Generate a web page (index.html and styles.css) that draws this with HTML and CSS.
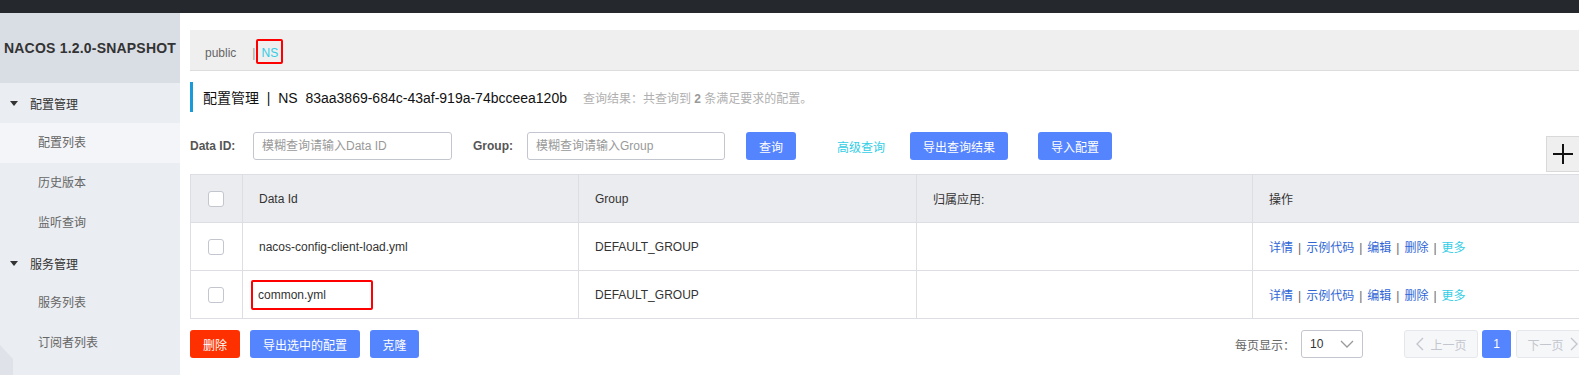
FILE: index.html
```html
<!DOCTYPE html>
<html lang="zh-CN">
<head>
<meta charset="utf-8">
<title>Nacos</title>
<link rel="stylesheet" href="styles.css">
</head>
<body>
<div class="topbar"></div>
<div class="layout">
  <aside class="sidebar">
    <div class="brand">NACOS 1.2.0-SNAPSHOT</div>
    <nav class="menu">
      <div class="menu-group"><span class="caret"></span>配置管理</div>
      <div class="menu-item active">配置列表</div>
      <div class="menu-item">历史版本</div>
      <div class="menu-item">监听查询</div>
      <div class="menu-group"><span class="caret"></span>服务管理</div>
      <div class="menu-item">服务列表</div>
      <div class="menu-item">订阅者列表</div>
    </nav>
    <div class="corner"></div>
  </aside>
  <main class="main">
    <div class="ns-bar">
      <span class="ns-public">public</span>
      <span class="ns-sep">|</span>
      <span class="ns-current">NS</span>
    </div>
    <div class="title-row">
      <span class="title-text">配置管理&nbsp; | &nbsp;NS&nbsp; 83aa3869-684c-43af-919a-74bcceea120b</span>
      <span class="title-info">查询结果：共查询到 <b>2</b> 条满足要求的配置。</span>
    </div>
    <div class="search-row">
      <label class="label label-id">Data ID:</label>
      <div class="input input-id">模糊查询请输入Data ID</div>
      <label class="label label-group">Group:</label>
      <div class="input input-group">模糊查询请输入Group</div>
      <button class="btn btn-query">查询</button>
      <span class="adv-link">高级查询</span>
      <button class="btn btn-export">导出查询结果</button>
      <button class="btn btn-import">导入配置</button>
    </div>
    <div class="add-btn">
      <svg width="20" height="20" viewBox="0 0 20 20"><path d="M10 0V20M0 10H20" stroke="#111" stroke-width="2" fill="none"/></svg>
    </div>
    <table class="table">
      <colgroup>
        <col class="c-check"><col class="c-id"><col class="c-group"><col class="c-app"><col class="c-op">
      </colgroup>
      <thead>
        <tr>
          <th class="cell-check"><span class="checkbox"></span></th>
          <th>Data Id</th>
          <th>Group</th>
          <th>归属应用:</th>
          <th>操作</th>
        </tr>
      </thead>
      <tbody>
        <tr>
          <td class="cell-check"><span class="checkbox"></span></td>
          <td>nacos-config-client-load.yml</td>
          <td>DEFAULT_GROUP</td>
          <td></td>
          <td><span class="link">详情</span><span class="sep">|</span><span class="link">示例代码</span><span class="sep">|</span><span class="link">编辑</span><span class="sep">|</span><span class="link">删除</span><span class="sep">|</span><span class="link more">更多</span></td>
        </tr>
        <tr>
          <td class="cell-check"><span class="checkbox"></span></td>
          <td><span class="hl">common.yml</span></td>
          <td>DEFAULT_GROUP</td>
          <td></td>
          <td><span class="link">详情</span><span class="sep">|</span><span class="link">示例代码</span><span class="sep">|</span><span class="link">编辑</span><span class="sep">|</span><span class="link">删除</span><span class="sep">|</span><span class="link more">更多</span></td>
        </tr>
      </tbody>
    </table>
    <div class="footer-row">
      <div class="footer-actions">
        <button class="btn btn-danger">删除</button>
        <button class="btn btn-export-sel">导出选中的配置</button>
        <button class="btn btn-clone">克隆</button>
      </div>
      <div class="pager">
        <span class="page-size-label">每页显示：</span>
        <div class="select"><span>10</span>
          <svg width="14" height="8" viewBox="0 0 14 8"><path d="M1 1L7 7L13 1" stroke="#999" stroke-width="1.3" fill="none"/></svg>
        </div>
        <div class="page-btn page-prev"><svg width="9" height="14" viewBox="0 0 9 14"><path d="M8 1L2 7L8 13" stroke="#c4c6cf" stroke-width="1.4" fill="none"/></svg>上一页</div>
        <div class="page-num">1</div>
        <div class="page-btn page-next">下一页<svg width="9" height="14" viewBox="0 0 9 14"><path d="M1 1L7 7L1 13" stroke="#c4c6cf" stroke-width="1.4" fill="none"/></svg></div>
      </div>
    </div>
  </main>
</div>
</body>
</html>
```
FILE: styles.css
```css
* { box-sizing: border-box; }
html, body { margin: 0; padding: 0; overflow: hidden; }
body {
  width: 1600px;
  height: 375px;
  font-family: "Liberation Sans", "Noto Sans CJK SC", sans-serif;
  font-size: 12px;
  color: #333;
  background: #fff;
}
.topbar { height: 13px; background: #25292e; }
.layout { display: flex; height: 362px; }

.sidebar {
  width: 180px;
  flex: none;
  background: #eaedf1;
  position: relative;
}
.brand {
  height: 70px;
  line-height: 70px;
  background: #d9dde4;
  padding-left: 4px;
  font-weight: bold;
  font-size: 14px;
  letter-spacing: 0.2px;
  color: #333;
  white-space: nowrap;
}
.menu-group {
  height: 40px;
  display: flex;
  align-items: center;
  padding-left: 10px;
  color: #333;
  font-size: 12px;
}
.caret {
  width: 0; height: 0;
  border-left: 4px solid transparent;
  border-right: 4px solid transparent;
  border-top: 5px solid #333;
  margin-right: 12px;
}
.menu-item {
  height: 40px;
  line-height: 40px;
  padding-left: 38px;
  color: #666;
}
.menu-item.active { background: #f4f5f8; }
.corner {
  position: absolute;
  left: 0; top: 332px;
  width: 13px; height: 30px;
  background: #dfe2e8;
  clip-path: polygon(0 0, 100% 14px, 100% 100%, 0 100%);
}

.main {
  flex: none;
  width: 1420px;
  padding: 17px 10px 0 10px;
  position: relative;
}
.ns-bar {
  height: 41px;
  background: #efefef;
  border-bottom: 1px solid #dcdcdc;
  display: flex;
  align-items: center;
  padding-left: 15px;
  padding-top: 2px;
}
.ns-public { color: #666; margin-top: 4px; }
.ns-sep { color: #999; margin-left: 16px; margin-right: 1px; margin-top: 4px; }
.ns-current {
  color: #33cde5;
  border: 2px solid #f00;
  border-radius: 2px;
  height: 25px;
  padding: 4px 3px 0 3px;
  line-height: 17px;
  margin-top: 1px;
}
.title-row {
  margin-top: 11px;
  height: 30px;
  border-left: 3px solid #1a9bd7;
  display: flex;
  align-items: center;
  padding-left: 10px;
}
.title-text { font-size: 14px; color: #111; }
.title-info { color: #b0b0b0; margin-left: 16px; font-size: 12px; }
.title-info b { color: #999; }

.search-row {
  margin-top: 20px;
  height: 28px;
  display: flex;
  align-items: center;
}
.label { font-weight: bold; color: #555; }
.label-id { width: 63px; }
.label-group { width: 54px; margin-left: 21px; }
.input {
  height: 28px;
  border: 1px solid #c4c6cf;
  border-radius: 3px;
  color: #999;
  line-height: 26px;
  padding-left: 8px;
}
.input-id { width: 199px; }
.input-group { width: 198px; }
.btn {
  height: 28px;
  border: none;
  border-radius: 3px;
  background: #5584ff;
  color: #fff;
  font-family: inherit;
  font-size: 12px;
  padding: 0;
  text-align: center;
}
.btn-query { width: 50px; margin-left: 21px; }
.adv-link { color: #33cde5; margin-left: 41px; }
.btn-export { width: 98px; margin-left: 25px; }
.btn-import { width: 74px; margin-left: 30px; }

.add-btn {
  position: absolute;
  left: 1366px;
  top: 123px;
  width: 34px;
  height: 36px;
  background: #efefef;
  border: 1px solid #d9d9d9;
  display: flex;
  align-items: center;
  justify-content: center;
}

.table {
  margin-top: 14px;
  width: 1400px;
  border-collapse: collapse;
  table-layout: fixed;
}
.c-check { width: 52px; }
.c-id { width: 336px; }
.c-group { width: 338px; }
.c-app { width: 336px; }
.c-op { width: 338px; }
.table th, .table td {
  border: 1px solid #dcdee3;
  height: 48px;
  padding: 0 16px;
  text-align: left;
  font-weight: normal;
  color: #333;
  white-space: nowrap;
}
.table th { background: #ebecf0; }
.table .cell-check { padding: 0; text-align: center; }
.checkbox {
  display: inline-block;
  vertical-align: middle;
  width: 16px; height: 16px;
  border: 1px solid #c4c6cf;
  border-radius: 3px;
  background: #fff;
  margin-left: -2px;
}
.link { color: #2f66d6; }
.link.more { color: #33cde5; }
.sep { color: #666; margin: 0 5px; }
.hl {
  display: inline-block;
  border: 2px solid #f00;
  border-radius: 2px;
  width: 122px;
  height: 30px;
  line-height: 26px;
  margin-left: -8px;
  padding-left: 5px;
}

.footer-row {
  margin-top: 11px;
  height: 28px;
  display: flex;
  align-items: center;
  justify-content: space-between;
  width: 1400px;
}
.footer-actions { display: flex; gap: 10px; }
.btn-danger { background: #ff3000; width: 50px; }
.btn-export-sel { width: 110px; }
.btn-clone { width: 49px; }
.pager { display: flex; align-items: center; }
.page-size-label { color: #666; margin-right: 6px; }
.select {
  width: 62px;
  height: 28px;
  border: 1px solid #c4c6cf;
  border-radius: 3px;
  display: flex;
  align-items: center;
  justify-content: space-between;
  padding: 0 8px 0 8px;
  color: #333;
}
.page-btn {
  height: 28px;
  width: 74px;
  border: 1px solid #e6e7eb;
  background: #f6f7f9;
  border-radius: 3px;
  color: #c4c6cf;
  display: flex;
  align-items: center;
  justify-content: center;
  gap: 6px;
}
.page-prev { margin-left: 41px; }
.page-num {
  width: 29px;
  height: 28px;
  line-height: 28px;
  text-align: center;
  background: #5584ff;
  color: #fff;
  border-radius: 3px;
  margin: 0 5px 0 4px;
}
```
